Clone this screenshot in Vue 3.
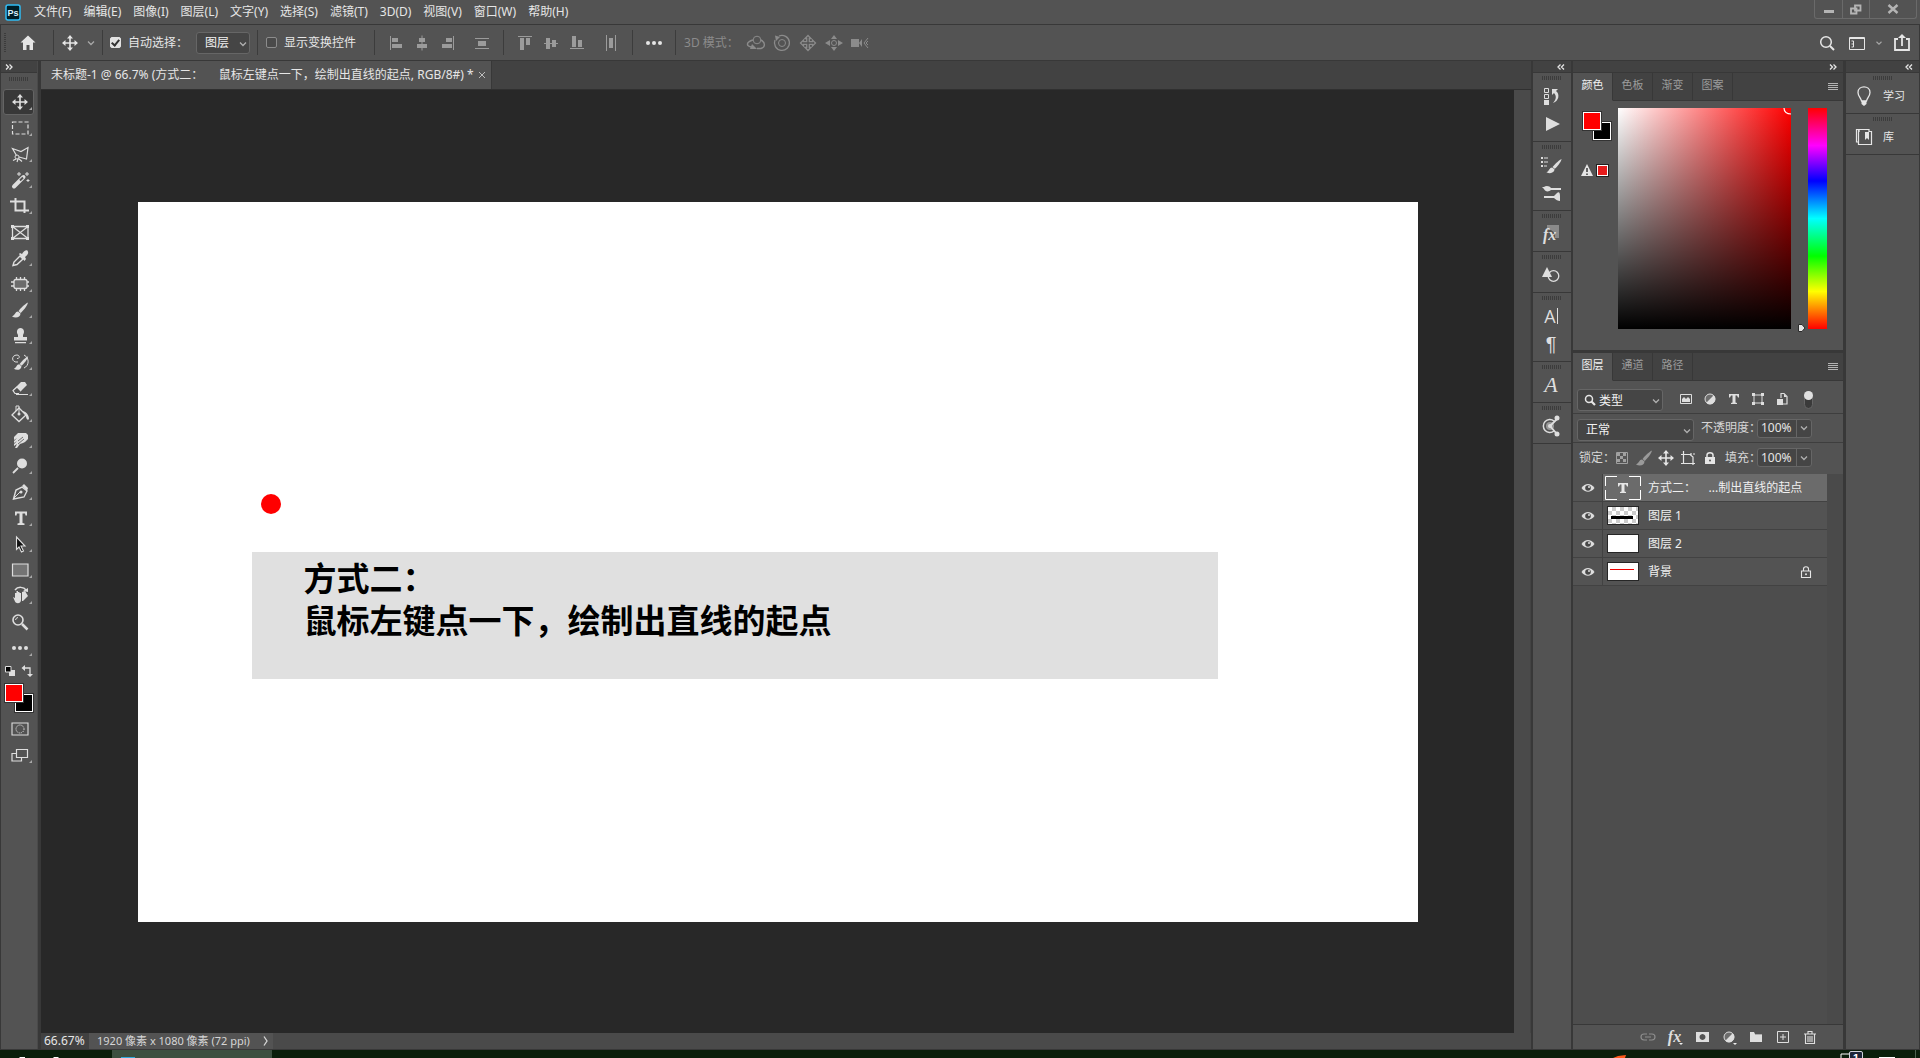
<script setup>
import { ref } from 'vue'

const menus = ['文件(F)', '编辑(E)', '图像(I)', '图层(L)', '文字(Y)', '选择(S)', '滤镜(T)', '3D(D)', '视图(V)', '窗口(W)', '帮助(H)']
const docTitle = '未标题-1 @ 66.7% (方式二：     鼠标左键点一下，绘制出直线的起点, RGB/8#) *'

const move = '<path d="M-7 0H7M0-7V7" stroke="currentColor" stroke-width="1.6"/><path d="M0-8L3-4.500H-3zM0 8L3 4.500H-3zM-8 0L-4.500-3V3zM8 0L4.500-3V3z" fill="currentColor"/>'
const brush = '<path d="M8-7.500C4-5.500 0-1 -1.500 1L0.500 3C3 1 7-3.500 8-7.500z" fill="currentColor"/><path d="M-2 1.500C-5 1.500-4.500 5-8 6.500C-4.500 8.500 0.500 7.500 0.500 3.500z" fill="currentColor"/>'

const icons = {
  home: '<path d="M0-7.500L-7.500-0.500H-5V7H-1.500V2H1.500V7H5V-0.500H7.500z" fill="currentColor"/>',
  move,
  chevron: '<path d="M-3-1.500L0 1.500L3-1.500" fill="none" stroke="currentColor" stroke-width="1.300"/>',
  alignLeft: '<path d="M-5.500-7V7" stroke="currentColor"/><path d="M-4-5H2V-1H-4zM-4 1H6V5H-4z" fill="currentColor"/>',
  alignCenter: '<path d="M0-7.500V7.500" stroke="currentColor"/><path d="M-3-5H3V-1H-3zM-5 1H5V5H-5z" fill="currentColor"/>',
  alignRight: '<path d="M5.500-7V7" stroke="currentColor"/><path d="M-2-5H4V-1H-2zM-6 1H4V5H-6z" fill="currentColor"/>',
  distribute: '<path d="M-7-4.500H7M-7 5.500H7" stroke="currentColor"/><path d="M-4-2H4V3H-4z" fill="currentColor"/>',
  alignTop: '<path d="M-7-6.500H7" stroke="currentColor"/><path d="M-5-5H-1V7H-5zM1-5H5V2H1z" fill="currentColor"/>',
  alignMiddle: '<path d="M-7 0.500H7" stroke="currentColor"/><path d="M-5-5H-1V6H-5zM1-3H5V4H1z" fill="currentColor"/>',
  alignBottom: '<path d="M-7 5.500H7" stroke="currentColor"/><path d="M-5-7H-1V4H-5zM1-3H5V4H1z" fill="currentColor"/>',
  distributeV: '<path d="M-4.500-8V8M4.500-8V8" stroke="currentColor"/><path d="M-2-5H2V5H-2z" fill="currentColor"/>',
  dots: '<g fill="currentColor"><circle cx="-6" r="2"/><circle r="2"/><circle cx="6" r="2"/></g>',
  orbit: '<circle cx="1" cy="-3" r="3.800" fill="none" stroke="currentColor"/><path d="M-3-3C-10-1-10 3-5 4M5-3C9-1 10 4 5 5.500H1" fill="none" stroke="currentColor" stroke-width="1.400"/><path d="M-4 1L1 6H-6z" fill="currentColor"/>',
  roll: '<circle r="3.500" fill="none" stroke="currentColor"/><path d="M-3-7A7.500 7.500 0 1 1-7-3" fill="none" stroke="currentColor" stroke-width="1.300"/><path d="M-7-7.500L-2-6L-6-2z" fill="currentColor"/>',
  pan: '<path d="M0-7.500L3-4.500H1.300V-1.300H4.500V-3L7.500 0L4.500 3V1.300H1.300V4.500H3L0 7.500L-3 4.500H-1.300V1.300H-4.500V3L-7.500 0L-4.500-3V-1.300H-1.300V-4.500H-3z" fill="none" stroke="currentColor" stroke-width="1.300"/>',
  slide: '<circle r="2.500" fill="none" stroke="currentColor"/><path d="M0-8L3-4H-3zM0 8L3 4H-3zM-9 0L-4-3V3zM9 0L4-3V3z" fill="currentColor"/>',
  camera: '<path d="M-9-4H-1V4H-9zM-1 0L2-4V4z" fill="currentColor"/><path d="M8-5L4 0L8 5M8-2L6 0L8 2" fill="none" stroke="currentColor"/>',
  search: '<circle cx="-1" cy="-1" r="5.300" fill="none" stroke="currentColor" stroke-width="1.500"/><path d="M3 3L7 7" stroke="currentColor" stroke-width="2"/>',
  workspace: '<path d="M-7.500-5.500H7.500V6.500H-7.500z" fill="none" stroke="currentColor"/><path d="M-7.500-4.500H7.500M-3.500-2V4M-5.500-2H-3.500M-5.500 1H-3.500M-5.500 4H-3.500" stroke="currentColor"/>',
  share: '<path d="M-4-4H-7V7H7V-4H4" fill="none" stroke="currentColor" stroke-width="1.800"/><path d="M0 3V-6" stroke="currentColor" stroke-width="1.800"/><path d="M0-9L4-5H-4z" fill="currentColor"/>',
  menu: '<path d="M-5-3.500H5M-5-1.500H5M-5 .5H5M-5 2.500H5" stroke="currentColor"/>',
  marquee: '<path d="M-7.500-6H8V6H-7.500z" fill="none" stroke="currentColor" stroke-width="1.200" stroke-dasharray="4 2"/>',
  lasso: '<path d="M-3.500 1.500L-7.500-5.500L1-2.500L8-6.500L6.500 5L-1 3" fill="none" stroke="currentColor" stroke-width="1.200"/><circle cx="-3" cy="3" r="2" fill="none" stroke="currentColor"/><path d="M-1.500 4.500L2 7.500M-4 5L-7 6.500M-2 5L-3 8" stroke="currentColor" stroke-width="1.200"/>',
  wand: '<path d="M-6 6.500L3.500-3" stroke="currentColor" stroke-width="4" stroke-linecap="round"/><path d="M0 0.500L3-2.500" stroke="#535353" stroke-width="2"/><path d="M-1-8V-4M-3-6H1M7-8V-4M5-6H9M8-1V2M6.500 0.500H9.500" stroke="currentColor"/>',
  crop: '<path d="M-10-4.500H4.500V7M-4.500-8V4.500H9" fill="none" stroke="currentColor" stroke-width="2"/>',
  frame: '<path d="M-7.500-5.500H8V6.500H-7.500zL8 6.500M8-5.500L-7.500 6.500" fill="none" stroke="currentColor" stroke-width="1.300"/><path d="M-9-7h3v3h-3zM6-7h3v3h-3zM-9 5h3v3h-3zM6 5h3v3h-3z" fill="currentColor"/>',
  eyedropper: '<path d="M-7 7.500L-6 4L0-2L3 1L-3 6.500z" fill="none" stroke="currentColor" stroke-width="1.400"/><path d="M-1-4L0-5L2-4C4-8 8-9 8-6C9-4 6-2 5-1L6 1L4.500 3z" fill="currentColor"/>',
  patch: '<rect x="-6" y="-4.500" width="13" height="9" rx="2" fill="#6b6b6b" stroke="currentColor" stroke-width="1.300"/><path d="M-3.500-7V-4M0.500-7V-4M4.500-7V-4M-3.500 4V7M0.500 4V7M4.500 4V7M-9-2H-6M-9 2H-6M7-2H9M7 2H9" stroke="currentColor" stroke-width="1.300"/>',
  brush,
  stamp: '<path d="M-2-1C-4-4-3-8 0.500-8C4-8 5-4 3-1V1H7V4.500H-6V1H-2zM-5 6H6V7.200H-5z" fill="currentColor"/>',
  history: `<g transform="translate(1 1) scale(.9)">${brush}</g><path d="M-2 0C-9 1-9-7-3-7C0-7 0-3-3-3.500M4-7C10-4 9 4 4 6" fill="none" stroke="currentColor"/>`,
  eraser: '<path d="M1-6H5L7-3L-1 5H-5L-7 2z" fill="currentColor"/><path d="M-4 6.500H8" stroke="currentColor"/><path d="M-1 5.500H-5L-7 2.500L-3-1L1 3" fill="#535353" stroke="currentColor" stroke-width="1.200"/>',
  bucket: '<path d="M-8 1L-1-6L6 1L-1 7.500z" fill="none" stroke="currentColor" stroke-width="1.300"/><path d="M-4-3V-8H-1V0" fill="none" stroke="currentColor"/><circle cx="-1" cy="0" r="1.500" fill="currentColor"/><path d="M2-3C6-3 9 1 9 5C8 7 6 5 6 2z" fill="currentColor"/>',
  smudge: '<path d="M-6-3L-2-7H6L8-5V-1L5 2L3 3L0 4L-3 8H-5L-3 4L-6 6V4L-3 1L-6 3V1L-3-2L-6 0z" fill="currentColor"/><path d="M-2 4L4-1M-2 1L3-3" stroke="#535353" stroke-width=".8"/>',
  dodge: '<circle cx="2" cy="-2.500" r="5" fill="currentColor"/><path d="M-2 2L-7 7" stroke="currentColor" stroke-width="1.800"/>',
  pen: '<path d="M-6.500 7L-4-2L2-5L7-1L4 5z" fill="none" stroke="currentColor" stroke-width="1.400"/><path d="M2-6L4-8L8-4L7-1z" fill="currentColor"/><path d="M-6 6L0 0" stroke="currentColor"/><circle cx="1" cy="0" r="1.500" fill="currentColor"/>',
  type: '<path d="M-5-6.500H7V-2.500H5.500L5-4.500H2.500V5L4.500 5.500V7H-2.500V5.500L-0.500 5V-4.500H-3L-3.500-2.500H-5z" fill="currentColor"/>',
  select: '<path d="M-3.500-7L5 2H1L3.500 7L1.500 8L-1 3L-3.500 5.500z" fill="#111" stroke="currentColor" stroke-width="1.100"/>',
  rect: '<path d="M-7.500-6H8V6H-7.500z" fill="#747474" stroke="currentColor" stroke-width="1.200"/>',
  hand: '<path d="M-7 1L-5 2V-3H-3.500V1V-5H-2V1V-4H-0.500V1V-3H1V4C1 8-4 8-5 5.500z" fill="currentColor"/><path d="M2-4L5-5L8 0L3 5L2 5z" fill="currentColor"/><path d="M-5-6C-2-10 4-9 6-6" fill="none" stroke="currentColor" stroke-width="1.500"/><path d="M8-8V-4L3-5z" fill="currentColor"/>',
  zoom: '<circle cx="-2" cy="-2" r="5" fill="none" stroke="currentColor" stroke-width="1.600"/><path d="M2 2L7.500 7.500" stroke="currentColor" stroke-width="2.500"/><path d="M-4.500-2A3 3 0 0 1-2-4.500" fill="none" stroke="currentColor"/>',
  historyPanel: '<path d="M-6.500-7.500H-2.500V-3.500H-6.500zM-6.500-1.500H-2.500V2.500H-6.500z" fill="none" stroke="currentColor"/><path d="M-7 4H-2V9H-7zM1-7H7L5-5C9-2 8 5 2 7C5 4 6 0 3-3L1-1z" fill="currentColor"/>',
  play: '<path d="M-5-7L9 0L-5 7z" fill="currentColor"/>',
  brushes: `<g transform="translate(3 1) scale(.95)">${brush}</g><path d="M-10-8h2v2h-2zM-10-4h2v2h-2zM-10 0h2v2h-2zM-7-7.500h4v1h-4zM-7-3.500h4v1h-4zM-7 .5h3v1h-3z" fill="currentColor"/>`,
  brushSettings: '<path d="M-9-6L-7-6C-5-8-1-7 0-5H10V-3H0C-2-1-6-1-7-4zM-7 3H3L6 0C8-2 9 0 9 3V8C7 8 5 7 3 5H-7z" fill="currentColor"/>',
  shapes: '<path d="M-4-8L1 2H-9z" fill="currentColor"/><circle cx="2.500" cy="1" r="5.300" fill="none" stroke="currentColor" stroke-width="1.300"/>',
  learning: '<path d="M3-5A6.500 6.500 0 1 0 3 5" fill="none" stroke="currentColor" stroke-width="1.500"/><circle cx="-1" cy="0" r="4" fill="#999"/><path d="M6-7L-1 0L6 8" fill="none" stroke="currentColor" stroke-width="1.800"/><circle cx="6" cy="-8" r="2.500" fill="currentColor"/><circle cx="6" cy="8" r="2.500" fill="currentColor"/><circle cx="-1" cy="0" r="2" fill="currentColor"/>',
  bulb: '<path d="M-2.500 5C-3 2-6 0-6-3.500C-6-11 6-11 6-3.500C6 0 3 2 2.500 5z" fill="none" stroke="currentColor" stroke-width="1.300"/><path d="M-2.500 5H2.500V8L0 10L-2.500 8z" fill="currentColor"/>',
  book: '<path d="M-5-5V-7.500H-7.500V5H-5" fill="none" stroke="currentColor" stroke-width="1.200"/><path d="M-5.500-7.500H5V-5.500H7.500V7.500H-5.500z" fill="none" stroke="currentColor" stroke-width="1.200"/><path d="M1-5H5V3L3 1L1 3z" fill="currentColor"/>',
  image: '<path d="M-5.500-4.500H5.500V4.500H-5.500z" fill="none" stroke="currentColor"/><path d="M-4 3V0L-2-2L0 0L2-2L4 0V3z" fill="currentColor"/>',
  adjust: '<circle r="5" fill="#6d6d6d" stroke="currentColor"/><path d="M3.700-3.700A5.200 5.200 0 0 1-3.700 3.700z" fill="currentColor"/>',
  smallType: '<path d="M-5-5H5V-1.500H4L3-3.500H1.500V3.500L3 4V5H-3V4L-1.500 3.500V-3.500H-3L-4-1.500H-5z" fill="currentColor"/>',
  path: '<path d="M-4-4H4V4H-4z" fill="none" stroke="currentColor"/><path d="M-6-6h3v3h-3zM3-6h3v3h-3zM-6 3h3v3h-3zM3 3h3v3h-3z" fill="currentColor"/>',
  smart: '<path d="M-1-1V-5.500H2L5-2.500V5H0" fill="none" stroke="currentColor" stroke-width="1.200"/><path d="M-5 0H1V6H-5zM2-5V-2H5z" fill="currentColor"/>',
  checker: '<path d="M-5.500-5.500H5.500V5.500H-5.500z" fill="#555" stroke="#a0a0a0"/><path d="M-5-5h3v3h-3zM1-5h3v3h-3zM-2-2h3v3h-3zM-5 1h3v3h-3zM1 1h3v3h-3z" fill="#a0a0a0"/>',
  artboard: '<path d="M-4.500-7V5M-7-3.500H2L5-1V7M-7 5.500H7M5-4H7M3-5V-2" fill="none" stroke="currentColor" stroke-width="1.200"/>',
  lock: '<path d="M-5-1H5V6H-5z" fill="currentColor"/><path d="M-3-1V-3C-3-6 3-6 3-3V-1" fill="none" stroke="currentColor" stroke-width="1.500"/><circle cy="2.500" r="1" fill="#535353"/>',
  lockOutline: '<path d="M-4.500-1H4.500V5.500H-4.500zM-2.500-1V-3C-2.500-6 2.500-6 2.500-3V-1" fill="none" stroke="currentColor" stroke-width="1.100"/><circle cy="2.300" r="1" fill="currentColor"/>',
  eye: '<path d="M-6.500 0C-3-5.500 3-5.500 6.500 0C3 5-3 5-6.500 0z" fill="currentColor"/><circle r="2.800" fill="#484848"/><circle cx="1" cy="-1" r="1" fill="currentColor"/>',
  link: '<path d="M-1-3H-4C-8-3-8 3-4 3H-1M1-3H4C8-3 8 3 4 3H1M-3 0H3" fill="none" stroke="currentColor" stroke-width="1.200"/>',
  mask: '<path fill-rule="evenodd" d="M-6-5H7V5H-6zM0.500-3A3 3 0 1 0 .51-3z" fill="currentColor"/>',
  folder: '<path d="M-6-5H-2L-1-3H6V5H-6z" fill="currentColor"/><path d="M-1-2.500H6" stroke="#888" stroke-width=".6"/>',
  plus: '<path d="M-5.500-5.500H5.500V5.500H-5.500zM0-3V3M-3 0H3" fill="none" stroke="currentColor"/>',
  trash: '<path d="M-4.500-3V6.500H4.500V-3M-6-3H6M-2-3.500V-5.500H2V-3.500M-2-1V5M0-1V5M2-1V5" fill="none" stroke="currentColor" stroke-width="1.100"/>',
  quickMask: '<path d="M-8-6H8V6H-8z" fill="none" stroke="currentColor" stroke-width="1.100"/><circle r="4" fill="none" stroke="currentColor" stroke-dasharray="1.200 .9"/>',
  screen: '<path d="M-3.500-1.500H-8V6H1.500V3M-3.500-5.500H7.500V2.500H-3.500z" fill="none" stroke="currentColor" stroke-width="1.200"/>',
  defaults: '<path d="M-1-1H5V5H-1z" fill="currentColor"/><path d="M-4.500-4.500H1V1H-4.500z" fill="#000" stroke="currentColor"/>',
  swap: '<path d="M-3-3H3V3" fill="none" stroke="currentColor" stroke-width="1.300"/><path d="M-5.500-3L-2-6V0zM3 6L0 3H6z" fill="currentColor"/>',
  warn: '<path d="M0-6L6 6H-6z" fill="currentColor"/><path d="M0-2V2M0 3.500V5" stroke="#444" stroke-width="1.600"/>',
  effects: '<path d="M-4-9H8V4H4V-1L0-4H-4z" fill="#8a8a8a"/>',
  left: '<path d="M-.5-2.500L-3 0L-.5 2.500M3-2.500L.5 0L3 2.500" fill="none" stroke="currentColor" stroke-width="1.300"/>',
  right: '<path d="M.5-2.500L3 0L.5 2.500M-3-2.500L-.5 0L-3 2.500" fill="none" stroke="currentColor" stroke-width="1.300"/>',
  close: '<path d="M-3-3L3 3M3-3L-3 3" stroke="currentColor"/>',
  minimize: '<path d="M-5 1H5V4H-5z" fill="currentColor"/>',
  restore: '<path d="M-1-3.500H4.500V1.500H-1zM-5-.5H.5V4.500H-5z" fill="none" stroke="currentColor" stroke-width="1.800"/>',
  closeWindow: '<path d="M-4.500-4L4.500 4M4.500-4L-4.500 4" stroke="currentColor" stroke-width="2.400"/>'
}

const tools = [
  ['move', '移动工具'], ['marquee', '矩形选框工具'], ['lasso', '多边形套索工具'], ['wand', '魔棒工具'], ['crop', '裁剪工具'],
  ['frame', '图框工具'], ['eyedropper', '吸管工具'], ['patch', '修补工具'], ['brush', '画笔工具'], ['stamp', '仿制图章工具'],
  ['history', '历史记录画笔工具'], ['eraser', '橡皮擦工具'], ['bucket', '油漆桶工具'], ['smudge', '涂抹工具'], ['dodge', '减淡工具'],
  ['pen', '钢笔工具'], ['type', '横排文字工具'], ['select', '路径选择工具'], ['rect', '矩形工具'], ['hand', '旋转视图工具'],
  ['zoom', '缩放工具'], ['dots', '编辑工具栏']
]
const noCorner = ['frame', 'zoom']
const active = ref('move')

const alignA = ['alignLeft', 'alignCenter', 'alignRight']
const alignB = ['alignTop', 'alignMiddle', 'alignBottom']
const modes = ['orbit', 'roll', 'pan', 'slide', 'camera']

const dock = [
  [{ i: 'historyPanel' }, { i: 'play' }],
  [{ i: 'brushes' }, { i: 'brushSettings' }],
  [{ i: 'effects', t: 'fx', c: 'fx-text' }],
  [{ i: 'shapes' }],
  [{ t: 'A', c: 'char' }, { t: '¶', c: 'para' }],
  [{ t: 'A', c: 'glyph' }],
  [{ i: 'learning' }]
]
const filters = ['image', 'adjust', 'smallType', 'path', 'smart']
const locks = ['checker', 'brush', 'move', 'artboard', 'lock']
const layers = [
  { name: '方式二：    ...制出直线的起点', kind: 'text', selected: true },
  { name: '图层 1', kind: 'stroke' },
  { name: '图层 2', kind: 'blank' },
  { name: '背景', kind: 'redline', locked: true }
]
const actions = ['link', 'fx', 'mask', 'adjust', 'folder', 'plus', 'trash']

const autoSelect = ref(true)
const showTransform = ref(false)
const opacity = ref('100%')
const fill = ref('100%')
const box = '-12 -12 24 24'
</script>

<template>
  <div class="app">
    <header class="menubar">
      <svg class="logo" viewBox="0 0 16 17" aria-hidden="true">
        <rect x="1" y="1" width="14" height="15" rx="2" fill="#001d26" stroke="#2fbdf5" stroke-width="1.500" />
        <text x="8" y="12" text-anchor="middle" class="logo-text">Ps</text>
      </svg>
      <nav class="menus">
        <button v-for="m in menus" :key="m" class="menu">{{ m }}</button>
      </nav>
      <div class="window-buttons">
        <button aria-label="最小化"><svg class="icon" :viewBox="box" v-html="icons.minimize" /></button>
        <button aria-label="还原"><svg class="icon" :viewBox="box" v-html="icons.restore" /></button>
        <button class="wide" aria-label="关闭"><svg class="icon" :viewBox="box" v-html="icons.closeWindow" /></button>
      </div>
    </header>

    <div class="options">
      <span class="vgrip"></span>
      <button class="home" aria-label="主页"><svg class="icon" :viewBox="box" v-html="icons.home" /></button>
      <span class="sep tight"></span>
      <button class="opt" aria-label="移动工具"><svg class="icon" :viewBox="box" v-html="icons.move" /></button>
      <button class="drop" aria-label="工具预设"><svg class="icon" :viewBox="box" v-html="icons.chevron" /></button>
      <span class="sep tight"></span>
      <label class="check first"><input v-model="autoSelect" type="checkbox" />自动选择：</label>
      <span class="select mode">
        <select aria-label="自动选择"><option>图层</option><option>组</option></select>
        <svg class="icon arrow" :viewBox="box" v-html="icons.chevron" />
      </span>
      <span class="sep"></span>
      <label class="check second"><input v-model="showTransform" type="checkbox" />显示变换控件</label>
      <span class="sep"></span>
      <div class="group dim">
        <button v-for="a in alignA" :key="a" class="opt" :aria-label="a"><svg class="icon" :viewBox="box" v-html="icons[a]" /></button>
      </div>
      <button class="opt dim apart" aria-label="分布"><svg class="icon" :viewBox="box" v-html="icons.distribute" /></button>
      <span class="sep"></span>
      <div class="group dim">
        <button v-for="a in alignB" :key="a" class="opt" :aria-label="a"><svg class="icon" :viewBox="box" v-html="icons[a]" /></button>
      </div>
      <button class="opt dim apart" aria-label="垂直分布"><svg class="icon" :viewBox="box" v-html="icons.distributeV" /></button>
      <span class="sep"></span>
      <button class="opt" aria-label="更多"><svg class="icon" :viewBox="box" v-html="icons.dots" /></button>
      <span class="sep"></span>
      <span class="mode-label">3D 模式：</span>
      <div class="group faint">
        <button v-for="m in modes" :key="m" class="opt" :aria-label="m"><svg class="icon" :viewBox="box" v-html="icons[m]" /></button>
      </div>
      <div class="right-tools">
        <button class="opt" aria-label="搜索"><svg class="icon" :viewBox="box" v-html="icons.search" /></button>
        <button class="workspace" aria-label="工作区">
          <svg class="icon" :viewBox="box" v-html="icons.workspace" /><svg class="icon" :viewBox="box" v-html="icons.chevron" />
        </button>
        <button class="opt" aria-label="共享"><svg class="icon" :viewBox="box" v-html="icons.share" /></button>
      </div>
    </div>

    <div class="body">
      <aside class="toolbar">
        <div class="strip start"><svg class="icon" :viewBox="box" v-html="icons.right" /></div>
        <div class="grip-row"><span class="grip"></span></div>
        <button v-for="[k, label] in tools" :key="k" class="tool" :class="{ on: active === k }" :aria-label="label" @click="active = k">
          <svg class="icon" :viewBox="box">
            <g v-html="icons[k]" />
            <path v-if="!noCorner.includes(k)" class="corner" d="M12 5V8H9z" />
          </svg>
        </button>
        <div class="mini">
          <button aria-label="默认颜色"><svg class="icon" :viewBox="box" v-html="icons.defaults" /></button>
          <button aria-label="切换颜色"><svg class="icon" :viewBox="box" v-html="icons.swap" /></button>
        </div>
        <div class="swatches">
          <button class="bg" aria-label="背景色"></button>
          <button class="fg" aria-label="前景色"></button>
        </div>
        <button class="tool" aria-label="快速蒙版"><svg class="icon" :viewBox="box" v-html="icons.quickMask" /></button>
        <button class="tool" aria-label="屏幕模式">
          <svg class="icon" :viewBox="box"><g v-html="icons.screen" /><path class="corner" d="M12 5V8H9z" /></svg>
        </button>
      </aside>

      <main class="workarea">
        <div class="tabs">
          <div class="tab">
            <span class="tab-title">{{ docTitle }}</span>
            <button aria-label="关闭文档"><svg class="icon" :viewBox="box" v-html="icons.close" /></button>
          </div>
        </div>
        <div class="stage-row">
          <div class="stage">
            <div class="document">
              <span class="dot"></span>
              <p class="note">方式二：<br />鼠标左键点一下，绘制出直线的起点</p>
            </div>
          </div>
          <div class="scroll"></div>
        </div>
        <div class="status">
          <label class="zoom-level"><input value="66.67%" aria-label="缩放比例" /></label>
          <div class="doc-size"><span>1920 像素 x 1080 像素 (72 ppi)</span><button aria-label="状态选项"><svg class="icon" :viewBox="box"><path d="M-2-4.500L1 0L-2 4.500" fill="none" stroke="currentColor" stroke-width="1.300" /></svg></button></div>
        </div>
      </main>

      <aside class="dock">
        <div class="strip end"><svg class="icon" :viewBox="box" v-html="icons.left" /></div>
        <div v-for="(g, n) in dock" :key="n" class="dock-group">
          <span class="grip"></span>
          <button v-for="(d, k) in g" :key="k" :aria-label="d.i || d.t">
            <svg v-if="d.i" class="icon" :viewBox="box" v-html="icons[d.i]" />
            <span v-if="d.t" :class="d.c">{{ d.t }}</span>
          </button>
        </div>
      </aside>

      <aside class="panels">
        <div class="strip end"><svg class="icon" :viewBox="box" v-html="icons.right" /></div>
        <section class="panel">
          <div class="panel-tabs">
            <button class="current">颜色</button><button>色板</button><button>渐变</button><button>图案</button>
            <button class="panel-menu" aria-label="面板菜单"><svg class="icon" :viewBox="box" v-html="icons.menu" /></button>
          </div>
          <div class="color">
            <div class="color-side">
              <div class="swatches">
                <button class="bg" aria-label="背景色"></button>
                <button class="fg" aria-label="前景色"></button>
              </div>
              <div class="gamut"><svg class="icon" :viewBox="box" v-html="icons.warn" /><span class="web"></span></div>
            </div>
            <div class="field"><svg class="ring" viewBox="0 0 8 8"><path d="M1 0C1 4 4 6 8 6" fill="none" stroke="#fff" stroke-width="1.200" /></svg></div>
            <div class="hue"><svg class="hue-arrow" viewBox="0 0 10 10"><path d="M1.500 1.500H5L8 5L5 8.500H1.500z" fill="#e6e6e6" stroke="#2c2c2c" /></svg></div>
          </div>
        </section>
        <section class="panel layers">
          <div class="panel-tabs">
            <button class="current">图层</button><button>通道</button><button>路径</button>
            <button class="panel-menu" aria-label="面板菜单"><svg class="icon" :viewBox="box" v-html="icons.menu" /></button>
          </div>
          <div class="row filter">
            <span class="select kind">
              <svg class="icon lens" :viewBox="box"><circle cx="-1" cy="-1" r="3.500" fill="none" stroke="currentColor" stroke-width="1.500" /><path d="M1.500 1.500L5 5" stroke="currentColor" stroke-width="2.200" /></svg>
              <select aria-label="图层过滤"><option>类型</option><option>名称</option></select>
              <svg class="icon arrow" :viewBox="box" v-html="icons.chevron" />
            </span>
            <div class="filter-icons">
              <button v-for="f in filters" :key="f" :aria-label="f"><svg class="icon" :viewBox="box" v-html="icons[f]" /></button>
            </div>
            <button class="toggle" aria-label="过滤开关"></button>
          </div>
          <div class="row blend">
            <span class="select normal">
              <select aria-label="混合模式"><option>正常</option><option>溶解</option></select>
              <svg class="icon arrow" :viewBox="box" v-html="icons.chevron" />
            </span>
            <label class="num-label" for="opacity">不透明度：</label>
            <span class="num"><input id="opacity" v-model="opacity" /><button aria-label="不透明度滑块"><svg class="icon" :viewBox="box" v-html="icons.chevron" /></button></span>
          </div>
          <div class="row lock-row">
            <span class="lock-label">锁定：</span>
            <div class="lock-icons">
              <button v-for="l in locks" :key="l" :class="'lock-' + l" :aria-label="l"><svg class="icon" :viewBox="box" v-html="icons[l]" /></button>
            </div>
            <label class="num-label fill-label" for="fill">填充：</label>
            <span class="num"><input id="fill" v-model="fill" /><button aria-label="填充滑块"><svg class="icon" :viewBox="box" v-html="icons.chevron" /></button></span>
          </div>
          <div class="list-area">
            <ul class="list">
              <li v-for="l in layers" :key="l.name" class="layer" :class="{ selected: l.selected }">
                <button class="eye" aria-label="可见性"><svg class="icon" :viewBox="box" v-html="icons.eye" /></button>
                <div class="layer-main">
                  <svg v-if="l.kind === 'text'" class="text-thumb" viewBox="-18 -12 36 24">
                    <path d="M-17.500-2V-11.500H-6M6-11.500H17.500V-2M17.500 2V11.500H6M-6 11.500H-17.500V2" fill="none" stroke="#fff" />
                    <g v-html="icons.smallType" />
                  </svg>
                  <span v-else class="thumb" :class="l.kind"><i></i></span>
                  <span class="name">{{ l.name }}</span>
                  <svg v-if="l.locked" class="icon locked" :viewBox="box" v-html="icons.lockOutline" />
                </div>
              </li>
            </ul>
            <div class="list-scroll"></div>
          </div>
          <div class="actions">
            <button v-for="a in actions" :key="a" :class="'act-' + a" :aria-label="a">
              <span v-if="a === 'fx'">fx</span>
              <svg v-else class="icon" :viewBox="box" v-html="icons[a]" />
            </button>
          </div>
        </section>
      </aside>

      <aside class="side">
        <div class="strip end"><svg class="icon" :viewBox="box" v-html="icons.left" /></div>
        <div class="side-group"><span class="grip"></span><button><svg class="icon" :viewBox="box" v-html="icons.bulb" />学习</button></div>
        <div class="side-group"><span class="grip"></span><button><svg class="icon" :viewBox="box" v-html="icons.book" />库</button></div>
      </aside>
    </div>

    <footer class="taskbar">
      <svg class="task-left" viewBox="0 0 112 8"><path d="M19 8L20 7H25V8zM53 8L54 7H58L59 8z" fill="#fff" /></svg>
      <button class="task-active" aria-label="Photoshop"></button>
      <svg class="task-right" viewBox="0 0 320 8">
        <path d="M13 8L18 6L26 5L25 8z" fill="#ff5a1c" />
        <path d="M241 8V4H249" fill="none" stroke="#fff" />
        <path d="M279 7H295V8H279z" fill="#fff" />
        <path d="M315.500 0V8" stroke="#4d6350" />
      </svg>
      <span class="badge">1</span>
    </footer>
  </div>
</template>

<style>
body { background: #535353; }
</style>

<style scoped>
* { box-sizing: border-box; }
.app {
  --bar: #535353;
  --line: #383838;
  --dark: #424242;
  display: flex;
  flex-direction: column;
  min-height: 100vh;
  background: var(--line);
  color: #e6e6e6;
  font: 12px/16px "Noto Sans", "Noto Sans CJK SC", sans-serif;
  overflow: hidden;
}
button, select, input { font: inherit; color: inherit; margin: 0; }
button { display: flex; align-items: center; justify-content: center; padding: 0; border: 0; background: none; }
.icon { width: 24px; height: 24px; flex: none; display: block; }

.menubar { display: flex; align-items: center; height: 24px; padding-left: 5px; background: var(--bar); }
.logo { width: 16px; height: 17px; }
.logo-text { font: bold 9px "Liberation Sans", sans-serif; fill: #d8f3ff; }
.menus { display: flex; gap: 12px; margin-left: 13px; }
.window-buttons { display: flex; align-self: flex-start; margin-left: auto; margin-right: 3px; height: 19px; border: 1px solid #6a6a6a; border-top: 0; border-radius: 0 0 3px 3px; color: #b4b4b4; }
.window-buttons button { width: 27px; overflow: hidden; }
.window-buttons button + button { border-left: 1px solid #6a6a6a; }
.window-buttons .wide { width: 47px; }

.options { display: flex; align-items: center; height: 35px; margin: 1px 1px 0; padding-left: 3px; background: var(--bar); }
.vgrip { width: 2px; height: 20px; background: repeating-linear-gradient(#3c3c3c 0 1px, transparent 1px 2px); }
.home { width: 44px; height: 28px; }
.sep { width: 1px; height: 25px; margin: 0 8px; background: #3c3c3c; }
.sep.tight { margin: 0 3px; }
.opt { width: 26px; height: 26px; }
.drop { width: 16px; color: #a8a8a8; }
.check { display: flex; align-items: center; gap: 7px; }
.check.first { margin-left: 4px; width: 78px; white-space: nowrap; }
.check.second { margin-right: 10px; }
.check input { appearance: none; width: 11px; height: 11px; border: 1px solid #8c8c8c; border-radius: 2px; background: #4a4a4a; }
.check input:checked { position: relative; border-color: #e2e2e2; background: #e2e2e2; }
.check input:checked::after { content: ""; position: absolute; left: 2px; top: 0; width: 3px; height: 6px; border: solid #333; border-width: 0 2px 2px 0; transform: rotate(40deg); }
.select { position: relative; display: block; height: 22px; }
.select select { appearance: none; width: 100%; height: 100%; padding: 0 8px; border: 1px solid #666; border-radius: 3px; background: #454545; color: #f2f2f2; outline: 0; }
.select .arrow { position: absolute; right: -5px; top: 0; color: #b0b0b0; pointer-events: none; }
.mode { width: 54px; margin-left: 8px; }
.mode + .sep { margin-left: 7px; }
.group { display: flex; }
.dim { color: #9b9b9b; }
.faint, .mode-label { color: #8b8b8b; }
.apart { margin-left: 8px; }
.mode-label { min-width: 59px; white-space: nowrap; }
.right-tools { display: flex; align-items: center; margin-left: auto; margin-right: 4px; }
.workspace { width: 49px; padding-left: 4px; }
.workspace .icon + .icon { width: 20px; color: #a8a8a8; }

.body { display: flex; flex: 1; min-height: 0; margin-top: 1px; }
.strip { display: flex; align-items: center; height: 12px; border-bottom: 1px solid var(--line); background: var(--dark); overflow: hidden; }
.strip.end { justify-content: flex-end; }
.strip.end .icon { margin-right: -2px; }
.strip.start .icon { margin-left: -4px; }
.grip { display: block; width: 20px; height: 4px; background: repeating-linear-gradient(90deg, #3c3c3c 0 1px, transparent 1px 2px); }

.toolbar { display: flex; flex-direction: column; width: 37px; margin: 0 2px 1px 1px; background: var(--bar); border-right: 1px solid #4a4a4a; flex: none; }
.grip-row { height: 16px; padding: 4px 0 0 8px; }
.tool { width: 31px; height: 26px; margin-left: 2px; padding-left: 2px; border: 1px solid transparent; border-radius: 3px; color: #dedede; flex: none; }
.tool.on { background: #383838; border-color: #646464; }
.corner { fill: #a8a8a8; }
.mini { display: flex; height: 20px; }
.mini button { width: 17px; color: #dedede; }
.swatches { position: relative; width: 30px; height: 30px; }
.toolbar .swatches { margin: 2px 0 3px 3px; }
.swatches button { position: absolute; width: 20px; height: 20px; border: 1px solid #333; box-shadow: inset 0 0 0 1px #fff; }
.swatches .fg { left: 0; top: 0; background: #f00; }
.swatches .bg { right: 0; bottom: 0; background: #000; }

.workarea { display: flex; flex-direction: column; flex: 1; min-width: 0; margin: 0 1px 1px; }
.tabs { display: flex; height: 29px; background: var(--dark); border-bottom: 1px solid #303030; }
.tab { display: flex; align-items: center; width: 451px; padding-left: 10px; background: var(--bar); border-right: 1px solid var(--line); }
.tab-title { white-space: pre; }
.tab button { width: 16px; margin: 0 5px 0 auto; color: #bdbdbd; }
.stage-row { display: flex; flex: 1; }
.stage { flex: 1; display: flex; align-items: center; justify-content: center; background: #282828; overflow: hidden; min-width: 0; }
.scroll { width: 17px; background: #4a4a4a; border-right: 1px solid #434343; }
.document { position: relative; width: 1280px; height: 720px; padding: 350px 200px 0 114px; background: #fff; flex: none; }
.dot { position: absolute; left: 123px; top: 292px; width: 20px; height: 20px; border-radius: 50%; background: #f00; }
.note { height: 127px; margin: 0; padding: 4px 52px; background: #e0e0e0; color: #000; font: bold 33px/42px "Noto Sans CJK SC", sans-serif; }
.status { display: flex; height: 16px; background: #4a4a4a; }
.zoom-level { width: 48px; background: #414141; }
.zoom-level input { width: 48px; height: 16px; padding: 0 0 0 3px; border: 0; background: none; outline: 0; }
.doc-size { display: flex; align-items: center; width: 184px; padding-left: 8px; background: var(--bar); white-space: nowrap; color: #d6d6d6; font-size: 11px; }
.doc-size button { width: 14px; margin-left: auto; }

.dock { width: 38px; margin: 0 1px 1px; background: var(--bar); flex: none; }
.dock-group { padding: 3px 0; border-bottom: 1px solid var(--line); }
.dock-group .grip { margin: 0 0 2px 9px; }
.dock-group button { position: relative; width: 36px; height: 28px; color: #dedede; }
.char { padding-right: 1px; border-right: 1px solid #dedede; font: 18px/16px "Open Sans", sans-serif; }
.para { font: 20px/24px "Liberation Sans", sans-serif; }
.glyph { font: italic 22px/24px "Liberation Serif", serif; }
.fx-text { position: absolute; left: 10px; top: 5px; font: italic bold 16px/20px "Liberation Serif", serif; }

.panels { display: flex; flex-direction: column; width: 270px; margin: 0 2px 1px 1px; flex: none; }
.panel { background: var(--bar); }
.layers { display: flex; flex-direction: column; flex: 1; margin-top: 3px; }
.panel-tabs { display: flex; height: 28px; background: var(--dark); }
.panel-tabs button { width: 40px; padding-bottom: 3px; border: solid var(--line); border-width: 0 1px 1px 0; color: #9c9c9c; font-size: 11px; }
.panel-tabs .current { background: var(--bar); border-bottom-color: var(--bar); color: #f0f0f0; }
.panel-tabs .panel-menu { flex: 1; justify-content: flex-end; padding-bottom: 0; border-right: 0; color: #b4b4b4; }
.panel-menu .icon { margin-right: -2px; }
.color { display: flex; height: 249px; padding: 7px 16px 21px 0; }
.color-side { width: 45px; padding: 3px 0 0 9px; }
.gamut { display: flex; align-items: center; height: 14px; margin: 22px 0 0 -6px; }
.gamut .icon { margin-left: -1px; margin-right: -3px; }
.web { width: 13px; height: 13px; border: 1px solid #222; box-shadow: inset 0 0 0 1px #fff; background: #e61c1c; flex: none; }
.field { position: relative; flex: 1; background: linear-gradient(to top, #000, transparent), linear-gradient(to right, #fff, #f00); }
.ring { position: absolute; right: 0; top: 0; width: 8px; height: 8px; }
.hue { position: relative; width: 19px; margin-left: 17px; background: linear-gradient(#f00, #f0f 17%, #00f 33%, #0ff 50%, #0f0 67%, #ff0 83%, #f00); }
.hue-arrow { position: absolute; left: -11px; bottom: -4px; width: 10px; height: 10px; }

.row { display: flex; align-items: center; padding-left: 4px; border-bottom: 1px solid #3e3e3e; }
.row .select select { padding-left: 8px; padding-top: 1px; }
.filter { height: 33px; padding-top: 6px; }
.filter .kind { width: 86px; }
.row .kind select { padding-left: 21px; }
.lens { position: absolute; left: 1px; top: -1px; z-index: 1; pointer-events: none; }
.filter-icons { display: flex; margin: 0 0 2px 11px; color: #dedede; }
.filter-icons button { width: 24px; height: 20px; }
.toggle { position: relative; width: 9px; height: 18px; margin-left: 10px; border-radius: 5px; background: #3a3a3a; border: 1px solid #666; }
.toggle::before { content: ""; position: absolute; left: -1px; top: -1px; width: 9px; height: 9px; border-radius: 50%; background: #e0e0e0; }
.blend { height: 29px; padding-top: 3px; }
.blend .normal { width: 117px; }
.num-label { width: 59px; padding-left: 7px; white-space: nowrap; color: #d6d6d6; }
.num { display: flex; height: 19px; margin: 0 31px 3px auto; border: 1px solid #666; border-radius: 3px; background: #454545; flex: none; }
.num-label, .lock-label { margin-bottom: 3px; }
.num input { width: 38px; padding: 0 0 0 3px; border: 0; background: none; outline: 0; }
.num button { width: 15px; border-left: 1px solid #666; overflow: hidden; color: #b0b0b0; }
.lock-row { height: 31px; padding: 1px 0 0 6px; border-bottom: 0; }
.lock-label { width: 32px; white-space: nowrap; color: #d6d6d6; }
.lock-icons { display: flex; margin-bottom: 3px; }
.lock-icons button { width: 22px; height: 20px; }
.lock-icons .lock-brush { color: #9a9a9a; }
.fill-label { width: 36px; padding-left: 4px; }
.list-area { display: flex; flex: 1; background: #4d4d4d; }
.list { flex: 1; margin: 0; padding: 0; list-style: none; }
.list-scroll { width: 16px; background: #4a4a4a; }
.layer { display: flex; height: 28px; background: var(--bar); border-bottom: 1px solid #424242; }
.eye { width: 30px; border-right: 1px solid #424242; color: #dedede; }
.layer-main { display: flex; flex: 1; align-items: center; padding-left: 2px; }
.selected .layer-main { background: #6b6b6b; }
.text-thumb { width: 36px; height: 24px; flex: none; }
.thumb { display: flex; align-items: flex-start; width: 32px; height: 19px; margin: 0 2px; border: 1px solid #262626; background: #fff; }
.name { margin-left: 7px; white-space: pre; color: #f0f0f0; }
.thumb.stroke { background: repeating-conic-gradient(#ccc 0 25%, #fff 0 50%) 0 0 / 8px 8px; }
.stroke i { width: 22px; height: 3px; margin: 9px 0 0 3px; background: #000; }
.redline i { width: 24px; height: 1px; margin: 6px 0 0 2px; background: #e00; }
.locked { margin-left: auto; margin-right: 9px; }
.actions { display: flex; justify-content: flex-end; height: 25px; padding-right: 20px; border-top: 1px solid var(--line); }
.actions button { width: 27px; color: #dedede; }
.actions .act-link { color: #8e8e8e; }
.actions .act-fx { font: italic bold 16px/20px "Liberation Serif", serif; }
.actions .act-fx, .actions .act-adjust { position: relative; }
.actions .act-fx::after, .actions .act-adjust::after { content: ""; position: absolute; right: 5px; bottom: 4px; border: 2px solid transparent; border-top-color: #eee; border-bottom: 0; }

.side { width: 73px; margin: 0 1px 1px; background: var(--bar); flex: none; }
.side-group { padding: 3px 0; border-bottom: 1px solid var(--line); }
.side-group .grip { margin: 0 0 2px 27px; }
.side-group button { width: 100%; height: 28px; justify-content: flex-start; gap: 7px; padding-left: 6px; font-size: 11px; }

.taskbar { position: relative; display: flex; height: 8px; background: #0a1f0b; overflow: hidden; }
.task-left { width: 112px; height: 8px; flex: none; }
.task-active { width: 160px; height: 8px; background: linear-gradient(#2fa9dc, #2fa9dc) 9px 7px / 14px 1px no-repeat #3c5040; }
.task-right { width: 320px; height: 8px; margin-left: auto; }
.badge { position: absolute; right: 57px; top: 1px; width: 14px; height: 14px; border: 1px solid #d0d4dc; border-radius: 2px; background: #1b2638; color: #fff; font: bold 11px/13px "Liberation Sans", sans-serif; text-align: center; }
</style>
